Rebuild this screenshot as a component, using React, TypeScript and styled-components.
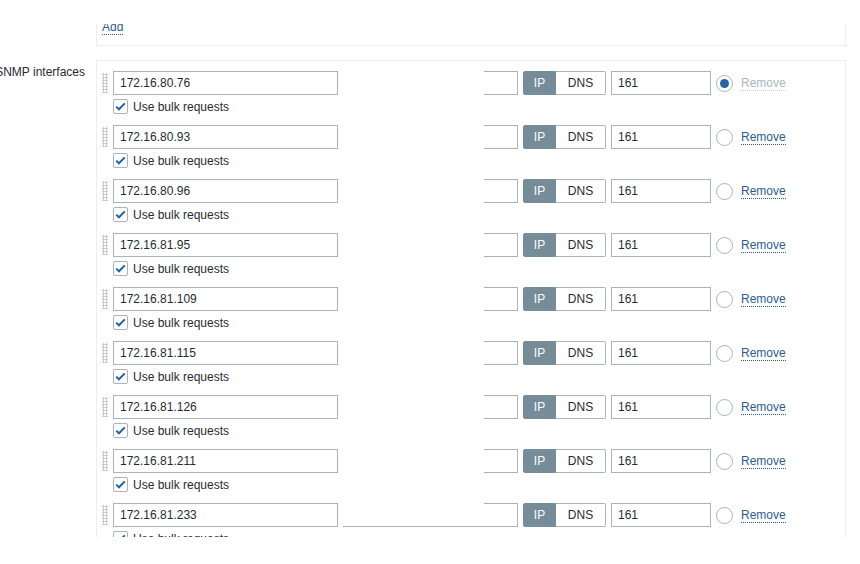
import React from "react";
import styled, { createGlobalStyle, css } from "styled-components";

const GlobalStyle = createGlobalStyle`
  html, body { margin: 0; padding: 0; background: #ffffff; }
  body {
    font-family: "Liberation Sans", Arial, sans-serif;
    font-size: 12px;
    line-height: 14px;
    color: #1f2c33;
  }
`;

const Page = styled.div`
  padding-top: 24px;
`;

const Viewport = styled.div`
  height: 513px;
  overflow: hidden;
`;

const FormRow = styled.div<{ $top?: number }>`
  display: grid;
  grid-template-columns: 96px 750px;
  margin-top: ${(p) => p.$top ?? 0}px;
`;

const Label = styled.div`
  display: flex;
  justify-content: flex-end;
  white-space: nowrap;
  padding: 5px 11px 0 0;
  min-width: 0;
`;

const Box = styled.div`
  border: 1px solid #ebeef0;
  background: #ffffff;
`;

const TopBox = styled(Box)`
  margin-top: -11px;
  padding: 6px 5px 11px;
`;

const IfaceBox = styled(Box)`
  padding: 10px 5px 10px;
  display: flex;
  flex-direction: column;
  gap: 11px;
`;

const Link = styled.a<{ $disabled?: boolean }>`
  color: ${(p) => (p.$disabled ? "#aab6c0" : "#2b5d90")};
  text-decoration: none;
  border-bottom: 1px dotted ${(p) => (p.$disabled ? "#c3ccd3" : "#2b5d90")};
  cursor: ${(p) => (p.$disabled ? "default" : "pointer")};
`;

const Iface = styled.div`
  display: grid;
  grid-template-columns: 11px auto;
  grid-template-rows: 24px 15px;
  row-gap: 4px;
`;

const Handle = styled.div`
  width: 6px;
  height: 20px;
  margin-top: 2px;
  background-image: radial-gradient(circle, #c6cdd2 1px, transparent 1.3px);
  background-size: 3px 3px;
`;

const MainLine = styled.div`
  display: flex;
  align-items: center;
  gap: 5px;
`;

const TextField = styled.input<{ $w: number }>`
  box-sizing: border-box;
  width: ${(p) => p.$w}px;
  height: 24px;
  margin: 0;
  padding: 0 6px;
  border: 1px solid #aab3b9;
  border-radius: 0;
  background: #ffffff;
  font: inherit;
  color: #1f2c33;
  outline: none;
`;

const HiddenField = styled.div<{ $keepBottom?: boolean }>`
  position: relative;
  box-sizing: border-box;
  width: 175px;
  height: 24px;
  border: 1px solid #aab3b9;
  background: #ffffff;
  &::before {
    content: "";
    position: absolute;
    left: -1px;
    top: -1px;
    width: 141px;
    height: ${(p) => (p.$keepBottom ? 23 : 24)}px;
    background: #ffffff;
  }
`;

const Toggle = styled.div`
  display: flex;
  height: 24px;
`;

const ToggleBtn = styled.span<{ $active?: boolean; $w: number }>`
  box-sizing: border-box;
  width: ${(p) => p.$w}px;
  height: 24px;
  display: flex;
  align-items: center;
  justify-content: center;
  ${(p) =>
    p.$active
      ? css`
          background: #768d99;
          color: #ffffff;
          border: 1px solid #768d99;
          border-radius: 2px 0 0 2px;
        `
      : css`
          background: #ffffff;
          color: #1f2c33;
          border: 1px solid #aab3b9;
          border-left: none;
          border-radius: 0 2px 2px 0;
        `}
`;

const Radio = styled.span<{ $checked?: boolean }>`
  box-sizing: border-box;
  width: 17px;
  height: 17px;
  border: 1px solid #aab3b9;
  border-radius: 50%;
  display: flex;
  align-items: center;
  justify-content: center;
  &::after {
    content: "";
    width: 9px;
    height: 9px;
    border-radius: 50%;
    background: ${(p) => (p.$checked ? "#2366a8" : "transparent")};
  }
`;

const RemoveWrap = styled.span`
  margin-left: 3px;
`;

const CheckLine = styled.label`
  grid-column: 2;
  display: flex;
  align-items: center;
  gap: 5px;
  height: 15px;
`;

const CheckBox = styled.span`
  box-sizing: border-box;
  width: 15px;
  height: 15px;
  border: 1px solid #aab3b9;
  border-radius: 2px;
  background: #ffffff;
  display: flex;
  align-items: center;
  justify-content: center;
`;

const ips = [
  "172.16.80.76",
  "172.16.80.93",
  "172.16.80.96",
  "172.16.81.95",
  "172.16.81.109",
  "172.16.81.115",
  "172.16.81.126",
  "172.16.81.211",
  "172.16.81.233",
];

function Check() {
  return (
    <svg width="11" height="9" viewBox="0 0 11 9" aria-hidden>
      <path d="M1.2 4.6 L4 7.3 L9.8 1.4" fill="none" stroke="#1f64a8" strokeWidth="2" />
    </svg>
  );
}

export default function App() {
  return (
    <>
      <GlobalStyle />
      <Page>
        <Viewport>
          <FormRow>
            <div />
            <TopBox>
              <Link>Add</Link>
            </TopBox>
          </FormRow>
          <FormRow $top={14}>
            <Label>SNMP interfaces</Label>
            <IfaceBox>
              {ips.map((ip, i) => (
                <Iface key={ip}>
                  <Handle />
                  <MainLine>
                    <TextField $w={225} readOnly value={ip} />
                    <HiddenField $keepBottom={i === ips.length - 1} />
                    <Toggle>
                      <ToggleBtn $active $w={33}>IP</ToggleBtn>
                      <ToggleBtn $w={50}>DNS</ToggleBtn>
                    </Toggle>
                    <TextField $w={100} readOnly value="161" />
                    <Radio $checked={i === 0} />
                    <RemoveWrap>
                      <Link $disabled={i === 0}>Remove</Link>
                    </RemoveWrap>
                  </MainLine>
                  <CheckLine>
                    <CheckBox>
                      <Check />
                    </CheckBox>
                    Use bulk requests
                  </CheckLine>
                </Iface>
              ))}
            </IfaceBox>
          </FormRow>
        </Viewport>
      </Page>
    </>
  );
}
